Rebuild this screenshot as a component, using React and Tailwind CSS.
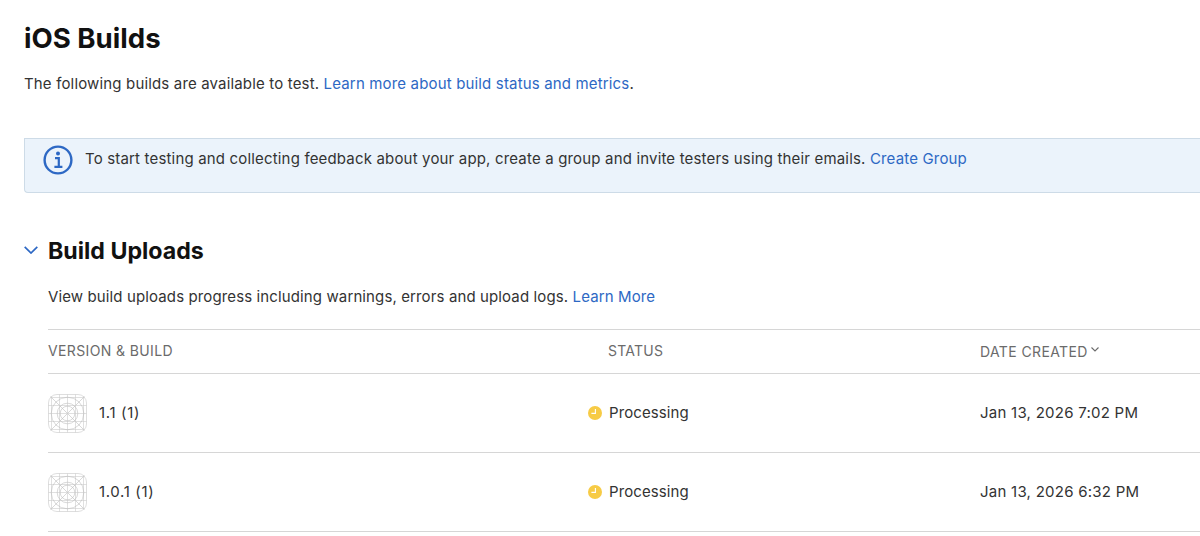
import React from "react";

const builds = [
  { version: "1.1 (1)", status: "Processing", created: "Jan 13, 2026 7:02 PM" },
  { version: "1.0.1 (1)", status: "Processing", created: "Jan 13, 2026 6:32 PM" },
];

function InfoIcon() {
  return (
    <svg width="30" height="30" viewBox="0 0 30 30" fill="none" className="shrink-0">
      <circle cx="15" cy="15" r="13.4" stroke="#2d68c4" strokeWidth="2.4" />
      <circle cx="15" cy="8.4" r="2" fill="#2d68c4" />
      <path d="M12 13.2h3.8v8.4M11.4 21.8h8" stroke="#2d68c4" strokeWidth="2.2" />
    </svg>
  );
}

function AppIconPlaceholder() {
  return (
    <svg width="39" height="39" viewBox="0 0 39 39" fill="none" stroke="#bdbdbd" strokeWidth="0.6">
      <rect x="0.5" y="0.5" width="38" height="38" rx="8.5" stroke="#c8c8c8" />
      <path d="M2.5 2.5l34 34M36.5 2.5l-34 34" />
      <g stroke="#cbcbcb">
        <path d="M3.5 2.5v34M11.5 0.5v38M19.5 0.5v38M27.5 0.5v38M35.5 2.5v34" />
        <path d="M2.5 3.5h34M0.5 11.5h38M0.5 19.5h38M0.5 27.5h38M2.5 35.5h34" />
      </g>
      <circle cx="19.5" cy="19.5" r="16.3" />
      <circle cx="19.5" cy="19.5" r="10.3" />
      <circle cx="19.5" cy="19.5" r="7.3" />
    </svg>
  );
}

function ClockIcon() {
  return (
    <svg width="14" height="14" viewBox="0 0 14 14" fill="none">
      <circle cx="7" cy="7" r="7" fill="#f7cb45" />
      <path d="M7.4 3v4.4H3.4" stroke="#fff" strokeWidth="1.1" />
    </svg>
  );
}

function App() {
  return (
    <div
      className="h-[536px] overflow-hidden bg-white pl-6 text-[15px] leading-6 tracking-[0.17px] text-[#333]"
      style={{ fontFamily: 'Inter, "Liberation Sans", sans-serif' }}
    >
      <h1 className="pt-5 text-[27.6px] leading-9 font-bold tracking-normal text-[#111]">iOS Builds</h1>
      <p className="mt-4 tracking-[0.16px] whitespace-nowrap">
        The following builds are available to test.{" "}
        <a className="text-[#2d68c4]">Learn more about build status and metrics</a>.
      </p>

      <div className="mt-[42px] flex h-[55px] rounded-bl border border-r-0 border-[#cddbe7] bg-[#ebf3fb] pt-[6px] pl-[18px]">
        <InfoIcon />
        <p className="ml-3 pt-[2px] whitespace-nowrap">
          To start testing and collecting feedback about your app, create a group and invite testers using their emails.{" "}
          <a className="text-[#2d68c4]">Create Group</a>
        </p>
      </div>

      <div className="mt-[42px] flex h-8 items-center">
        <svg width="14" height="8" viewBox="0 0 14 8" fill="none" className="mr-[10px] mb-[2px]">
          <path d="M0.7 0.8L7 7l6.3-6.2" stroke="#2d68c4" strokeWidth="1.7" />
        </svg>
        <h2 className="text-[23.2px] leading-8 font-bold tracking-normal text-[#111]">Build Uploads</h2>
      </div>

      <div className="pl-6">
        <p className="mt-[18px] tracking-[0.12px] whitespace-nowrap">
          View build uploads progress including warnings, errors and upload logs.{" "}
          <a className="text-[#2d68c4]">Learn More</a>
        </p>

        <div className="mt-5 border-t border-[#d6d6d6]">
          <div className="grid h-11 grid-cols-[540px_392px_1fr] items-center border-b border-[#d6d6d6] text-[14px] tracking-[0.38px] text-[#6b6b6b]">
            <div className="pb-[2px]">VERSION &amp; BUILD</div>
            <div className="pb-[2px] pl-5 tracking-[0.25px]">STATUS</div>
            <div className="flex items-center">
              DATE CREATED
              <svg width="8" height="5" viewBox="0 0 8 5" fill="none" className="mb-1 ml-[3px]">
                <path d="M0.5 0.5L4 4l3.5-3.5" stroke="#6b6b6b" strokeWidth="1.1" />
              </svg>
            </div>
          </div>
          {builds.map((build) => (
            <div
              key={build.version}
              className="grid h-[79px] grid-cols-[540px_392px_1fr] items-center border-b border-[#d6d6d6]"
            >
              <div className="flex items-center gap-3">
                <AppIconPlaceholder />
                <span className="tracking-[0.65px]">{build.version}</span>
              </div>
              <div className="flex items-center gap-[7px]">
                <ClockIcon />
                <span className="tracking-[0.1px]">{build.status}</span>
              </div>
              <div className="tracking-[0.25px]">{build.created}</div>
            </div>
          ))}
        </div>
      </div>
    </div>
  );
}

export default App;
